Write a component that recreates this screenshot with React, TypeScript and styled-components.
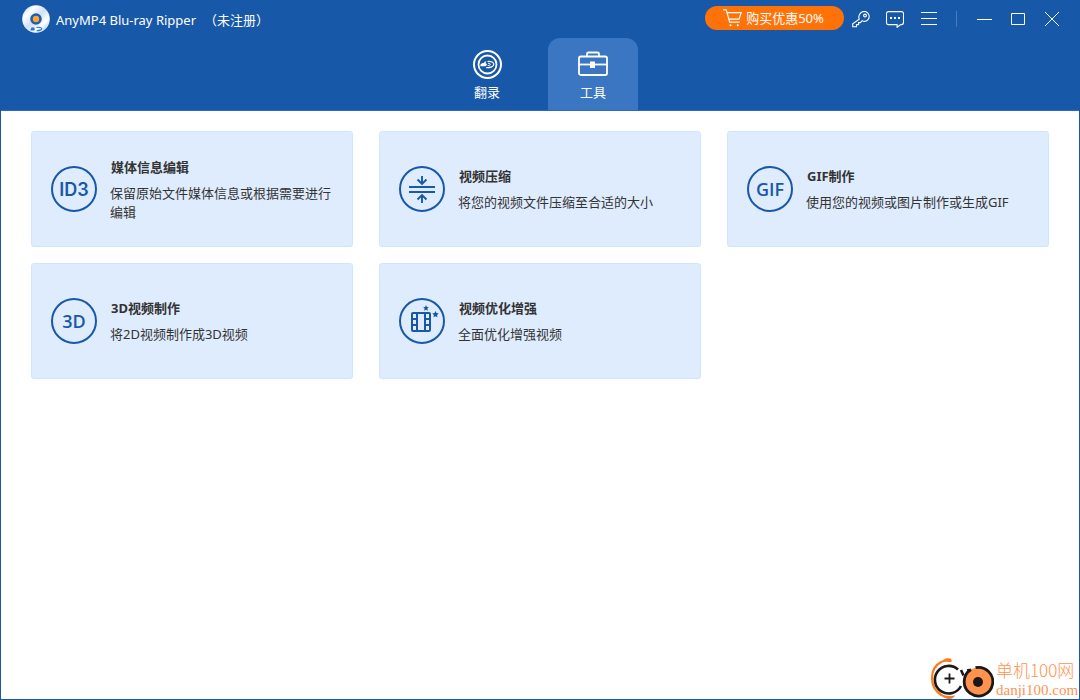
import React from "react";
import styled, { createGlobalStyle } from "styled-components";

const blue = "#1858a8";

const GlobalStyle = createGlobalStyle`
  *, *::before, *::after { box-sizing: border-box; }
  body {
    margin: 0;
    background: #fff;
    color: #333;
    font: 13px/19px "Noto Sans", "Noto Sans CJK SC", sans-serif;
  }
  button { font: inherit; color: inherit; border: 0; background: none; padding: 0; cursor: pointer; }
  svg { display: block; flex: none; }
`;

const Frame = styled.div`
  position: relative;
  display: flex;
  flex-direction: column;
  min-height: 100vh;
  border: 1px solid ${blue};
  border-top: 0;
`;

const Header = styled.header`
  background: ${blue};
  border-bottom: 1px solid #2f6bb8;
  color: #fff;
`;

const TitleBar = styled.div`
  display: flex;
  align-items: center;
  height: 38px;
  padding: 0 10px 0 21px;
`;

const AppTitle = styled.h1`
  display: flex;
  gap: 8px;
  margin: 2px auto 0 6px;
  font-size: 13px;
  font-weight: 400;
  white-space: nowrap;
`;

const PromoButton = styled.button`
  display: flex;
  align-items: center;
  justify-content: center;
  gap: 4px;
  width: 139px;
  height: 24px;
  margin-bottom: 2px;
  padding-right: 2px;
  border-radius: 12px;
  background: #ff7208;
`;

const IconButton = styled.button`
  display: flex;
  align-items: center;
  justify-content: center;
  width: 34px;
  height: 38px;
`;

const Divider = styled.span`
  width: 1px;
  height: 16px;
  margin: 0 10px;
  background: #4b7dbd;
`;

const Tabs = styled.nav`
  display: flex;
  justify-content: center;
  gap: 16px;
`;

const Tab = styled.button<{ $active?: boolean }>`
  display: flex;
  flex-direction: column;
  align-items: center;
  gap: 4px;
  width: 90px;
  height: 72px;
  padding-top: 11px;
  border-radius: 12px 12px 0 0;
  background: ${(p) => (p.$active ? "#3a76c1" : "transparent")};
`;

const ToolGrid = styled.main`
  display: grid;
  grid-template-columns: repeat(3, 1fr);
  gap: 16px 26px;
  padding: 20px 30px 80px;
`;

const ToolCard = styled.button`
  display: flex;
  align-items: center;
  gap: 13px;
  min-height: 116px;
  padding: 0 19px;
  border: 1px solid #d0e6fb;
  border-radius: 3px;
  background: #dfecfe;
  text-align: left;
`;

const Ring = styled.span<{ $face?: string }>`
  display: flex;
  align-items: center;
  justify-content: center;
  flex: none;
  width: 46px;
  height: 46px;
  border: 2px solid ${blue};
  border-radius: 50%;
  color: ${blue};
  font-family: ${(p) => (p.$face ? `"${p.$face}", ` : "")}"Open Sans", sans-serif;
  font-size: 18px;
  font-weight: 600;
`;

const ToolText = styled.span`
  display: flex;
  flex-direction: column;
  gap: 5px;
  padding-bottom: 1px;
`;

const ToolName = styled.strong`
  padding-left: 1px;
  line-height: 23px;
`;

const Watermark = styled.a`
  position: absolute;
  right: 0;
  bottom: 0;
  display: flex;
  align-items: flex-end;
  gap: 2px;
  color: #ff9350;
  text-decoration: none;
`;

const SiteName = styled.span`
  display: flex;
  flex-direction: column;
  width: 83px;
  white-space: nowrap;
`;

const SiteTitle = styled.span`
  font: 300 17px/22px "Noto Sans CJK SC", sans-serif;
`;

const SiteHost = styled.span`
  font: 15px/18px "Liberation Serif", serif;
`;

const Logo = () => (
  <svg width="28" height="28" viewBox="0 0 28 28" aria-hidden="true">
    <defs>
      <linearGradient id="disc" x1="0" y1="0" x2="1" y2="1">
        <stop offset="0" stopColor="#9cc2f2" />
        <stop offset=".25" stopColor="#fff" />
        <stop offset=".5" stopColor="#cfe0f8" />
        <stop offset=".72" stopColor="#fff" />
        <stop offset="1" stopColor="#8db6ec" />
      </linearGradient>
    </defs>
    <circle cx="14" cy="14" r="13.8" fill="url(#disc)" />
    <circle cx="14" cy="14" r="4.5" fill="#ffa62e" stroke="#1d5eb4" strokeWidth="2.6" />
    <path d="M9.200 22.500h2.500c1 0 1.300.7.500 1.200 1.200.4.900 1.800-.7 1.800H8.700c-.4-.9-.2-1.500.5-1.800z" fill="#1f78dc" />
    <path d="M14.500 22.500c3-.6 5.200.1 5.200 1.200s-2 2-5 1.900" fill="none" stroke="#1f78dc" strokeWidth="1.200" />
  </svg>
);

const CartIcon = () => (
  <svg width="19" height="18" viewBox="0 0 19 18" fill="none" stroke="#fff" strokeWidth="1.2" aria-hidden="true">
    <path d="M0 .8h3.2l3.5 12.4h10M4.2 3.6h14l-2.2 6.6H6" />
    <circle cx="7.5" cy="16.3" r="1" fill="#fff" stroke="none" />
    <circle cx="14.8" cy="16.3" r="1" fill="#fff" stroke="none" />
  </svg>
);

const KeyIcon = () => (
  <svg width="18" height="17" viewBox="0 0 18 17" fill="none" stroke="#fff" strokeWidth="1.1" aria-hidden="true">
    <path d="M7.2 8.2C6.3 5.4 7.2 3 8.9 1.7c2-1.5 4.9-1.5 6.7.1 2 1.8 2.1 4.9.4 6.8-1.5 1.7-3.8 2.1-5.8 1.1L8.4 11.6H6.6v2H4.5v2.2H.7v-3z" />
    <circle cx="13" cy="4.5" r="1.4" />
  </svg>
);

const ChatIcon = () => (
  <svg width="18" height="17" viewBox="0 0 18 17" fill="none" stroke="#fff" strokeWidth="1.1" aria-hidden="true">
    <path d="M2.5.6h13a2 2 0 0 1 2 2v9a2 2 0 0 1-2 2h-.8l-3.6 2.7v-2.7H2.5a2 2 0 0 1-2-2v-9a2 2 0 0 1 2-2z" />
    <path d="M4 7h2M8 7h2M12 7h2" strokeWidth="2" />
  </svg>
);

const MenuIcon = () => (
  <svg width="16" height="14" viewBox="0 0 16 14" stroke="#fff" aria-hidden="true">
    <path d="M0 .5h16M0 6.5h16M0 12.5h16" />
  </svg>
);

const MinimizeIcon = () => (
  <svg width="15" height="2" viewBox="0 0 15 2" stroke="#fff" aria-hidden="true">
    <path d="M0 1.5h15" />
  </svg>
);

const MaximizeIcon = () => (
  <svg width="14" height="12" viewBox="0 0 14 12" fill="none" stroke="#fff" aria-hidden="true">
    <path d="M.5.5h13v11H.5z" />
  </svg>
);

const CloseIcon = () => (
  <svg width="14" height="14" viewBox="0 0 14 14" stroke="#fff" aria-hidden="true">
    <path d="M0 0l14 14M14 0L0 14" />
  </svg>
);

const RipIcon = () => (
  <svg width="30" height="30" viewBox="0 0 30 30" fill="none" stroke="#fff" aria-hidden="true">
    <circle cx="15.500" cy="15.500" r="13.500" strokeWidth="2" />
    <circle cx="15.500" cy="15.500" r="9" strokeWidth="1.800" />
    <path d="M15.500 12.500c3.800-.5 6.300.8 6.300 2.700 0 2.200-3.400 3.700-7.600 3.400" strokeWidth="1.200" />
    <path d="M16 14.300c1.500 0 2.300.4 2.300 1s-1 1.200-2.600 1.300" />
    <path d="M9.200 14.800c.5-.8 1.400-1 2.400-.9l1.400-1.500h1.500l-1 1.800c2 .3 1.800 2.800-.7 3.100H8.600c-.5-1-.1-1.900.6-2.500z" fill="#fff" stroke="none" />
  </svg>
);

const ToolboxIcon = () => (
  <svg width="30" height="30" viewBox="0 0 30 30" fill="none" stroke="#fff" strokeWidth="1.8" aria-hidden="true">
    <path d="M9 7V5a1.5 1.5 0 0 1 1.500-1.500h9A1.500 1.500 0 0 1 21 5v2" />
    <rect x="1" y="7.500" width="28" height="18.500" rx="1.800" />
    <path d="M1 15.500h28" />
    <path d="M12 12.500h5v6.500h-5z" fill="#fff" stroke="none" />
  </svg>
);

const CompressIcon = () => (
  <svg width="26" height="28" viewBox="0 0 26 28" fill="none" stroke={blue} strokeWidth="1.9" aria-hidden="true">
    <path d="M0 12h26M0 17h26" strokeWidth="2" />
    <path d="M13 1v7.500M8.500 4.500L13 9l4.500-4.500M13 28v-7.500M8.500 24.500L13 20l4.500 4.500" />
  </svg>
);

const EnhanceIcon = () => (
  <svg width="42" height="42" viewBox="0 0 42 42" fill="none" stroke={blue} strokeWidth="2" aria-hidden="true">
    <rect x="11" y="13" width="18" height="18" rx="1" />
    <path d="M16 13v18M24 13v18M11 19h5M11 25h5M24 19h5M24 25h5" />
    <g fill={blue} stroke="none">
      <path d="M25 5l.9 1.900 2 .3-1.500 1.400.4 2.100-1.800-1-1.800 1 .4-2.100-1.500-1.400 2-.3z" />
      <path d="M34.500 11l1 2.100 2.300.3-1.700 1.600.4 2.300-2-1.100-2 1.100.4-2.300-1.700-1.600 2.300-.3z" />
    </g>
  </svg>
);

const SiteMark = () => (
  <svg width="64" height="42" viewBox="0 0 64 42" fill="none" aria-hidden="true">
    <path d="M12 4.500C5 8 2 14 2 21c0 8 4 14 10 17.500" stroke="#ff7a1c" strokeWidth="2.200" />
    <path d="M8 7.500C13 2 17 .5 20 1.500c2.400 1 2.200 3 .6 3.800C15 4 12 5.200 8 7.500z" fill="#ff7a1c" />
    <path d="M9 35.500c5 3.500 10 4.500 16 2.700-1 3.300-5 4.300-8 3.600-4-1-7-4-8-6.300z" fill="#ff7a1c" />
    <path d="M28 12.500A13.800 13.800 0 1 0 31 29" fill="#fff" stroke="#1c1718" strokeWidth="2.600" />
    <path d="M19.500 16.500v10M14.500 21.500h10" stroke="#1c1718" strokeWidth="1.800" />
    <path d="M31 13l2.500 5.500M38 12l1 3.500" stroke="#1c1718" strokeWidth="2.600" />
    <circle cx="48" cy="25" r="14.300" fill="#ff924c" />
    <path d="M45.500 10.700A14.300 14.300 0 1 1 41 12.500" stroke="#1c1718" strokeWidth="2.800" />
    <circle cx="48" cy="25" r="5" fill="#1c1718" />
  </svg>
);

const tools = [
  { name: "媒体信息编辑", text: "保留原始文件媒体信息或根据需要进行编辑", face: "Inter", icon: "ID3" },
  { name: "视频压缩", text: "将您的视频文件压缩至合适的大小", icon: <CompressIcon /> },
  { name: "GIF制作", text: "使用您的视频或图片制作或生成GIF", icon: "GIF" },
  { name: "3D视频制作", text: "将2D视频制作成3D视频", icon: "3D" },
  { name: "视频优化增强", text: "全面优化增强视频", icon: <EnhanceIcon /> },
];

export default function App() {
  return (
    <>
      <GlobalStyle />
      <Frame>
        <Header>
          <TitleBar>
            <Logo />
            <AppTitle>
              <span>AnyMP4 Blu-ray Ripper</span>
              <span>（未注册）</span>
            </AppTitle>
            <PromoButton>
              <CartIcon />
              <span>购买优惠50%</span>
            </PromoButton>
            <IconButton aria-label="注册"><KeyIcon /></IconButton>
            <IconButton aria-label="反馈"><ChatIcon /></IconButton>
            <IconButton aria-label="菜单"><MenuIcon /></IconButton>
            <Divider />
            <IconButton aria-label="最小化"><MinimizeIcon /></IconButton>
            <IconButton aria-label="最大化"><MaximizeIcon /></IconButton>
            <IconButton aria-label="关闭"><CloseIcon /></IconButton>
          </TitleBar>
          <Tabs>
            <Tab><RipIcon />翻录</Tab>
            <Tab $active aria-current="page"><ToolboxIcon />工具</Tab>
          </Tabs>
        </Header>
        <ToolGrid>
          {tools.map((tool) => (
            <ToolCard key={tool.name}>
              <Ring $face={tool.face}>{tool.icon}</Ring>
              <ToolText>
                <ToolName>{tool.name}</ToolName>
                <span>{tool.text}</span>
              </ToolText>
            </ToolCard>
          ))}
        </ToolGrid>
        <Watermark href="#">
          <SiteMark />
          <SiteName>
            <SiteTitle>单机100网</SiteTitle>
            <SiteHost>danji100.com</SiteHost>
          </SiteName>
        </Watermark>
      </Frame>
    </>
  );
}
